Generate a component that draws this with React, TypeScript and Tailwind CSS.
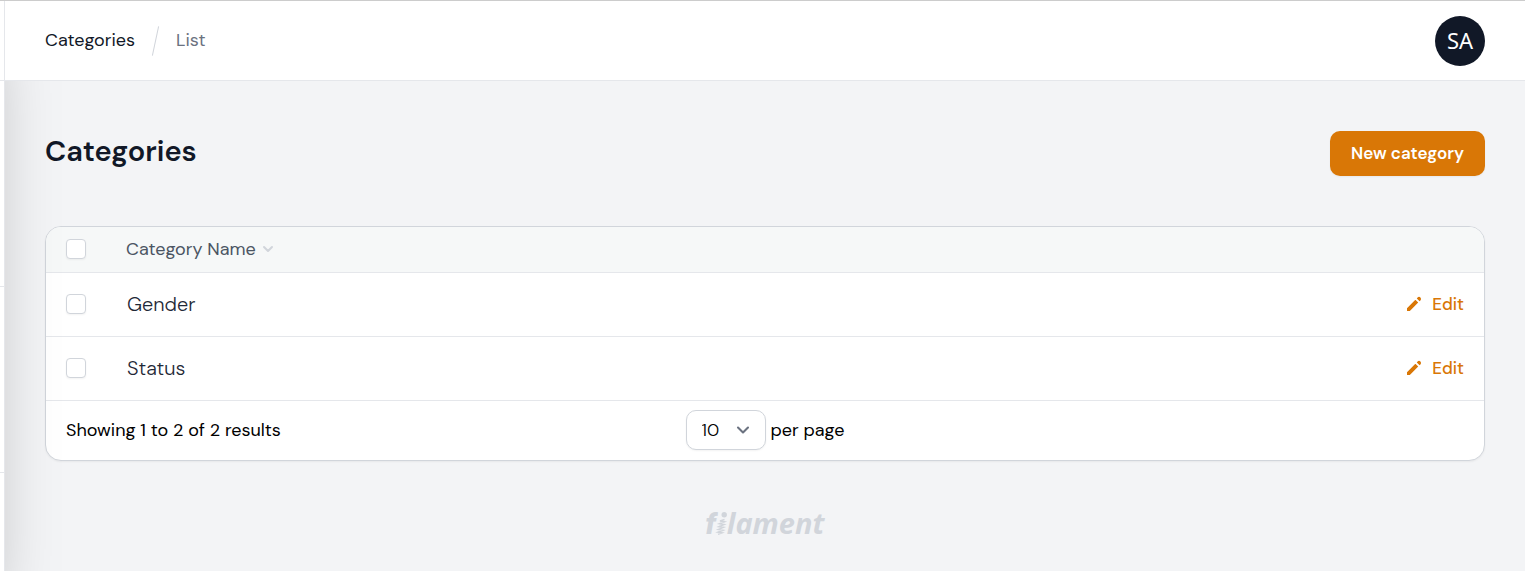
import { ChevronDown } from "lucide-react";

const categories = [
  { id: 1, name: "Gender" },
  { id: 2, name: "Status" },
];

const checkboxClass =
  "block size-5 appearance-none rounded border border-[#d1d5db] bg-white shadow-xs checked:border-[#d97706] checked:bg-[#d97706]";

function PencilIcon() {
  return (
    <svg className="size-5" viewBox="0 0 20 20" fill="currentColor" aria-hidden="true">
      <path d="M13.586 3.586a2 2 0 112.828 2.828l-.793.793-2.828-2.828.793-.793zM11.379 5.793L3 14.172V17h2.828l8.38-8.379-2.83-2.828z" />
    </svg>
  );
}

function Sidebar() {
  return (
    <aside className="relative z-10 -ml-[395px] w-[400px] shrink-0 border-r border-[#e5e7eb] bg-white shadow-[0_31px_63px_-15px_rgba(0,0,0,0.25)]">
      <div className="h-20 border-b border-[#e5e7eb]" />
      <div className="h-[206px] border-b border-[#e5e7eb]" />
      <div className="h-[186px] border-b border-[#e5e7eb]" />
    </aside>
  );
}

function Topbar() {
  return (
    <header className="relative z-20 flex h-20 items-center justify-between border-b border-[#e5e7eb] bg-white px-10">
      <nav className="flex items-center gap-5 text-[18px] leading-6">
        <a href="#categories" className="pb-px text-[#111827]">
          Categories
        </a>
        <span className="h-[30px] w-px rotate-12 bg-[#d1d5db]" />
        <a href="#list" className="pb-px text-[#6b7280]">
          List
        </a>
      </nav>
      <button
        type="button"
        className="flex size-[50px] items-center justify-center rounded-full bg-[#111827] font-['Noto_Sans',sans-serif] text-[22px] text-white"
      >
        SA
      </button>
    </header>
  );
}

function CategoriesTable() {
  return (
    <div className="overflow-hidden rounded-2xl border border-[#d1d5db] bg-white shadow-xs">
      <table className="w-full text-left">
        <thead className="bg-[#f6f8f8]">
          <tr className="h-[45px] border-b border-[#e5e7eb]">
            <th className="w-[60px] pl-5">
              <input type="checkbox" aria-label="Select all" className={checkboxClass} />
            </th>
            <th className="px-5">
              <button
                type="button"
                className="flex items-center gap-1 text-[18px] leading-6 font-normal text-[#4b5563]"
              >
                Category Name
                <ChevronDown className="size-4 text-[#d1d5db]" strokeWidth={3} />
              </button>
            </th>
            <th />
          </tr>
        </thead>
        <tbody>
          {categories.map((category) => (
            <tr key={category.id} className="h-16 border-b border-[#e5e7eb]">
              <td className="pl-5">
                <input type="checkbox" aria-label={category.name} className={checkboxClass} />
              </td>
              <td className="px-[21px] text-[20px] leading-6 font-light text-[#1f2937]">
                {category.name}
              </td>
              <td className="pr-5">
                <a
                  href="#edit"
                  className="flex items-center justify-end gap-2 text-[17px] leading-6 font-medium text-[#d97706]"
                >
                  <PencilIcon />
                  Edit
                </a>
              </td>
            </tr>
          ))}
        </tbody>
      </table>
      <div className="grid h-[59px] grid-cols-3 items-center px-5 text-[18px] leading-6 text-black">
        <div>Showing 1 to 2 of 2 results</div>
        <label className="flex items-center justify-center gap-[5px]">
          <span className="relative">
            <select className="block h-10 w-20 appearance-none rounded-[10px] border border-[#d1d5db] bg-white pl-[15px] font-light shadow-xs">
              <option>10</option>
              <option>25</option>
              <option>50</option>
            </select>
            <ChevronDown
              className="pointer-events-none absolute top-[10px] right-[13px] size-5 text-[#6b7280]"
              strokeWidth={2.5}
            />
          </span>
          per page
        </label>
      </div>
    </div>
  );
}

function Logo() {
  return (
    <a
      href="#filament"
      aria-label="filament"
      className="flex items-baseline font-['Open_Sans',sans-serif] text-[29px] leading-8 font-bold text-[#d1d5db] italic"
    >
      <span className="font-['Roboto',sans-serif] font-black">f</span>
      <svg className="h-[22px] w-[11px] overflow-visible" viewBox="0 0 11 22" aria-hidden="true">
        <circle cx="8.2" cy="2.8" r="2.7" fill="currentColor" />
        <path
          d="M8.500 7.500L4 9l4.500.8L3.500 11.800l4.500.8-5 2 4.500.8-5 2 4.500.8-5 2 4 .6-4 1.500"
          fill="none"
          stroke="currentColor"
          strokeWidth="1.500"
        />
      </svg>
      <span>lament</span>
    </a>
  );
}

export default function App() {
  return (
    <div className="flex min-h-screen overflow-hidden border-t border-[#ccc] bg-[#f3f4f6] font-['DM_Sans',Inter,sans-serif] text-[#111827]">
      <Sidebar />
      <div className="flex min-w-0 flex-1 flex-col">
        <Topbar />
        <main className="flex flex-col gap-[50px] px-10 pt-[50px]">
          <div className="flex items-start justify-between">
            <h1 className="text-[29px] leading-10 font-semibold">Categories</h1>
            <button
              type="button"
              className="h-[45px] rounded-[10px] bg-[#d97706] px-[21px] text-[17px] font-semibold text-white shadow-xs"
            >
              New category
            </button>
          </div>
          <CategoriesTable />
        </main>
        <footer className="flex justify-center py-[46px]">
          <Logo />
        </footer>
      </div>
    </div>
  );
}
